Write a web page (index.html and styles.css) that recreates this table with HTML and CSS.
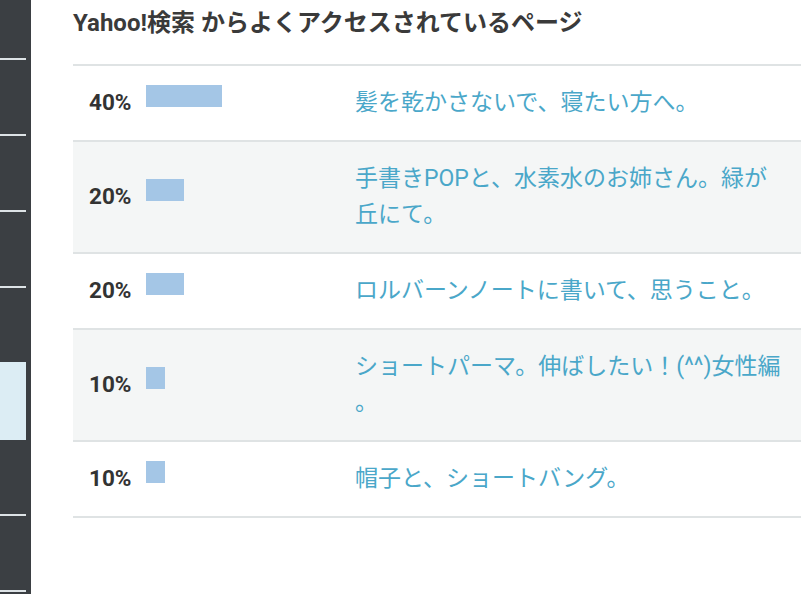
FILE: index.html
```html
<!DOCTYPE html>
<html lang="ja">
<head>
<meta charset="utf-8">
<title>Yahoo!検索 からよくアクセスされているページ</title>
<link rel="stylesheet" href="styles.css">
</head>
<body>
<div class="page">
  <nav class="sidebar">
    <ul class="nav">
      <li class="nav-item nav-item-first"></li>
      <li class="nav-item"></li>
      <li class="nav-item"></li>
      <li class="nav-item"></li>
      <li class="nav-item nav-item-before-active"></li>
      <li class="nav-item nav-item-active"></li>
      <li class="nav-item"></li>
      <li class="nav-item"></li>
    </ul>
  </nav>
  <main class="main">
    <h2 class="title">Yahoo!検索 からよくアクセスされているページ</h2>
    <div class="ranking">
      <div class="row">
        <div class="rate"><span class="pct">40%</span><span class="bar" style="width:76px"></span></div>
        <a class="link" href="#">髪を乾かさないで、寝たい方へ。</a>
      </div>
      <div class="row">
        <div class="rate"><span class="pct">20%</span><span class="bar" style="width:38px"></span></div>
        <a class="link" href="#">手書きPOPと、水素水のお姉さん。緑が丘にて。</a>
      </div>
      <div class="row">
        <div class="rate"><span class="pct">20%</span><span class="bar" style="width:38px"></span></div>
        <a class="link" href="#">ロルバーンノートに書いて、思うこと。</a>
      </div>
      <div class="row">
        <div class="rate"><span class="pct">10%</span><span class="bar" style="width:19px"></span></div>
        <a class="link" href="#">ショートパーマ。伸ばしたい！(^^)女性編。</a>
      </div>
      <div class="row">
        <div class="rate"><span class="pct">10%</span><span class="bar" style="width:19px"></span></div>
        <a class="link" href="#">帽子と、ショートバング。</a>
      </div>
    </div>
  </main>
</div>
</body>
</html>
```
FILE: styles.css
```css
html, body {
  margin: 0;
  padding: 0;
  background: #ffffff;
}

body {
  font-family: Roboto, "Noto Sans CJK JP", sans-serif;
  color: #353535;
}

.page {
  display: flex;
  height: 594px;
  overflow: hidden;
}

.sidebar {
  flex: none;
  width: 31px;
  background: #3b3f43;
}

.nav {
  list-style: none;
  margin: 0;
  padding: 0;
  width: 26px;
}

.nav-item {
  height: 74px;
  border-bottom: 2px solid #dde3e6;
}

.nav-item-first {
  height: 58px;
}

.nav-item-before-active {
  border-bottom-color: #dcedf4;
}

.nav-item-active {
  background: #dcedf4;
  border-bottom-color: #dcedf4;
}

.main {
  flex: 1;
  min-width: 0;
  padding-left: 42px;
}

.title {
  margin: 0;
  padding-top: 5px;
  font-size: 24px;
  line-height: 36px;
  font-weight: 700;
  color: #3a3a3a;
  margin-bottom: 23px;
  white-space: nowrap;
}

.ranking {
  border-top: 2px solid #dfe3e4;
}

.row {
  display: grid;
  grid-template-columns: 282px 1fr;
  border-bottom: 2px solid #dfe3e4;
}

.row:nth-child(even) {
  background: #f4f6f6;
}

.rate {
  align-self: center;
  padding-left: 16px;
  line-height: 36px;
  white-space: nowrap;
}

.pct {
  font-size: 22.5px;
  font-weight: 700;
  color: #333333;
}

.bar {
  display: inline-block;
  height: 22px;
  margin-left: 15px;
  margin-bottom: 3px;
  vertical-align: baseline;
  background: #a4c6e6;
}

.link {
  display: block;
  padding: 19px 12px 19px 0;
  font-size: 23px;
  line-height: 36px;
  color: #4aa7c9;
  text-decoration: none;
  line-break: anywhere;
}
```
